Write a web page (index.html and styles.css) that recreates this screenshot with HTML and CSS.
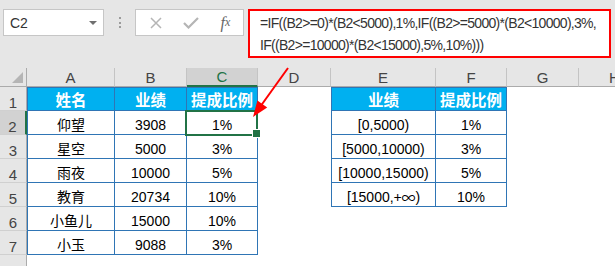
FILE: index.html
```html
<!DOCTYPE html>
<html lang="zh-CN">

<head>
  <meta charset="UTF-8" />
  <meta name="viewport" content="width=device-width, initial-scale=1.0" />
  <link rel="stylesheet" href="styles.css">
</head>

<body>
  <div class="app">
    <!-- formula bar -->
    <div class="fbar">
      <div class="namebox">
        <span>C2</span>
        <span class="caret"></span>
      </div>
      <div class="grip"><i></i><i></i><i></i></div>
      <div class="btns">
        <span class="btn">
          <svg width="12" height="12" viewBox="0 0 12 12">
            <path d="M1 1 L11 11 M11 1 L1 11" stroke="#b5b5b5" stroke-width="1.5" fill="none" />
          </svg>
        </span>
        <span class="btn">
          <svg width="16" height="12" viewBox="0 0 16 12">
            <path d="M1 6 L5.5 10.5 L15 1" stroke="#b5b5b5" stroke-width="2.2" fill="none" />
          </svg>
        </span>
        <span class="btn fx">f<span class="fxx">x</span></span>
      </div>
      <div class="formula">=IF((B2&gt;=0)*(B2&lt;5000),1%,IF((B2&gt;=5000)*(B2&lt;10000),3%,<br>IF((B2&gt;=10000)*(B2&lt;15000),5%,10%)))</div>
    </div>

    <!-- sheet -->
    <div class="sheet">
      <div class="corner"></div>
      <div class="ch">A</div>
      <div class="ch">B</div>
      <div class="ch sel-col">C</div>
      <div class="ch">D</div>
      <div class="ch">E</div>
      <div class="ch">F</div>
      <div class="ch">G</div>
      <div class="ch">H</div>

      <div class="rh">1</div>
      <div class="t l th">姓名</div>
      <div class="t th">业绩</div>
      <div class="t th">提成比例</div>
      <div></div>
      <div class="t l th">业绩</div>
      <div class="t th">提成比例</div>
      <div></div>
      <div></div>

      <div class="rh sel-row">2</div>
      <div class="t l">仰望</div>
      <div class="t">3908</div>
      <div class="t cur">1%</div>
      <div></div>
      <div class="t l">[0,5000)</div>
      <div class="t">1%</div>
      <div></div>
      <div></div>

      <div class="rh">3</div>
      <div class="t l">星空</div>
      <div class="t">5000</div>
      <div class="t">3%</div>
      <div></div>
      <div class="t l">[5000,10000)</div>
      <div class="t">3%</div>
      <div></div>
      <div></div>

      <div class="rh">4</div>
      <div class="t l">雨夜</div>
      <div class="t">10000</div>
      <div class="t">5%</div>
      <div></div>
      <div class="t l">[10000,15000)</div>
      <div class="t">5%</div>
      <div></div>
      <div></div>

      <div class="rh">5</div>
      <div class="t l">教育</div>
      <div class="t">20734</div>
      <div class="t">10%</div>
      <div></div>
      <div class="t l">[15000,<span class="inf">+∞</span>)</div>
      <div class="t">10%</div>
      <div></div>
      <div></div>

      <div class="rh">6</div>
      <div class="t l">小鱼儿</div>
      <div class="t">15000</div>
      <div class="t">10%</div>
      <div></div>
      <div></div>
      <div></div>
      <div></div>
      <div></div>

      <div class="rh">7</div>
      <div class="t l">小玉</div>
      <div class="t">9088</div>
      <div class="t">3%</div>
      <div></div>
      <div></div>
      <div></div>
      <div></div>
      <div></div>

      <div class="rh"></div>
      <div></div>
      <div></div>
      <div></div>
      <div></div>
      <div></div>
      <div></div>
      <div></div>
      <div></div>
    </div>

    <!-- red pointer -->
    <svg class="arrow" width="615" height="266" viewBox="0 0 615 266">
      <line x1="288" y1="68" x2="260" y2="107" stroke="#ff0000" stroke-width="2" />
      <polygon points="253,117 257.4,100.5 267.2,107.5" fill="#ff0000" />
    </svg>
  </div>
</body>

</html>
```

FILE: styles.css
```css
* {
  box-sizing: border-box;
}

body {
  margin: 0;
  background: #fff;
  font-family: "Liberation Sans", "Noto Sans CJK SC", sans-serif;
}

.app {
  position: relative;
  width: 615px;
  height: 266px;
  overflow: hidden;
}

/* formula bar */
.fbar {
  display: flex;
  align-items: flex-start;
  height: 68px;
  padding: 9px 0 0 3px;
  background: #e6e6e6;
}

.namebox {
  display: flex;
  align-items: center;
  justify-content: space-between;
  flex: none;
  width: 101px;
  height: 27px;
  padding: 0 6px;
  background: #fff;
  border: 1px solid #c6c6c6;
  font-size: 14px;
  color: #333;
}

.caret {
  border-left: 4px solid transparent;
  border-right: 4px solid transparent;
  border-top: 4px solid #6f6f6f;
}

.grip {
  display: flex;
  flex-direction: column;
  align-items: center;
  gap: 2.5px;
  flex: none;
  width: 31px;
  padding-top: 8px;
}

.grip i {
  width: 2px;
  height: 2px;
  background: #9b9b9b;
}

.btns {
  display: flex;
  flex: none;
  width: 109px;
  height: 27px;
  padding-left: 2px;
  background: #fff;
  border: 1px solid #c6c6c6;
}

.btn {
  display: flex;
  align-items: center;
  justify-content: center;
  width: 35px;
}

.fx {
  font-family: "Liberation Serif", serif;
  font-style: italic;
  font-size: 16px;
  color: #666;
}

.fxx {
  font-size: 12px;
}

.formula {
  flex: none;
  width: 363px;
  height: 49px;
  margin-left: 4px;
  padding: 1px 0 0 10px;
  background: #fff;
  border: 2px solid #ff0000;
  font-size: 14px;
  letter-spacing: -0.7px;
  line-height: 22px;
  color: #333;
  white-space: nowrap;
}

/* sheet grid */
.sheet {
  display: grid;
  grid-template-columns: 27px 88px 72px 71px 73px 105px 71px 72px 72px;
  grid-template-rows: 19px repeat(8, 24px);
}

.sheet > div {
  display: flex;
  align-items: flex-end;
  justify-content: center;
  font-size: 14px;
  line-height: 18px;
  color: #000;
  white-space: nowrap;
}

.corner {
  position: relative;
  background: #e6e6e6;
  border-right: 1px solid #ababab;
  border-bottom: 1px solid #ababab;
}

.corner::after {
  content: "";
  position: absolute;
  right: 3px;
  bottom: 3px;
  border-left: 11px solid transparent;
  border-bottom: 11px solid #b5b5b5;
}

.sheet > .ch {
  background: #e6e6e6;
  border-right: 1px solid #c4c4c4;
  border-bottom: 1px solid #ababab;
  color: #444;
  font-size: 15px;
  line-height: 14px;
  padding-bottom: 1px;
}

.sheet > .rh {
  background: #e6e6e6;
  border-right: 1px solid #ababab;
  border-bottom: 1px solid #d0d0d0;
  color: #444;
  font-size: 15px;
  line-height: 14px;
}

.sheet > .sel-col {
  background: #d2d2d2;
  border-bottom: 2px solid #217346;
  color: #217346;
}

.sheet > .sel-row {
  background: #d2d2d2;
  border-right: 2px solid #217346;
}

.t {
  border-right: 1px solid #2f75b5;
  border-bottom: 1px solid #2f75b5;
}

.t.l {
  border-left: 1px solid #2f75b5;
}

.sheet > .th {
  background: #00b0f0;
  border-top: 1px solid #2f75b5;
  color: #fff;
  font-weight: bold;
  font-size: 15.5px;
}

.inf {
  font-family: "Noto Sans CJK SC", sans-serif;
}

/* active cell */
.cur {
  position: relative;
}

.cur::after {
  content: "";
  position: absolute;
  left: -2px;
  top: -1px;
  right: -1px;
  bottom: -2px;
  border: 2px solid #217346;
}

.cur::before {
  content: "";
  position: absolute;
  right: -4px;
  bottom: -4px;
  width: 7px;
  height: 7px;
  background: #217346;
  border: 1px solid #fff;
  z-index: 1;
}

.arrow {
  position: absolute;
  left: 0;
  top: 0;
  pointer-events: none;
}
```
